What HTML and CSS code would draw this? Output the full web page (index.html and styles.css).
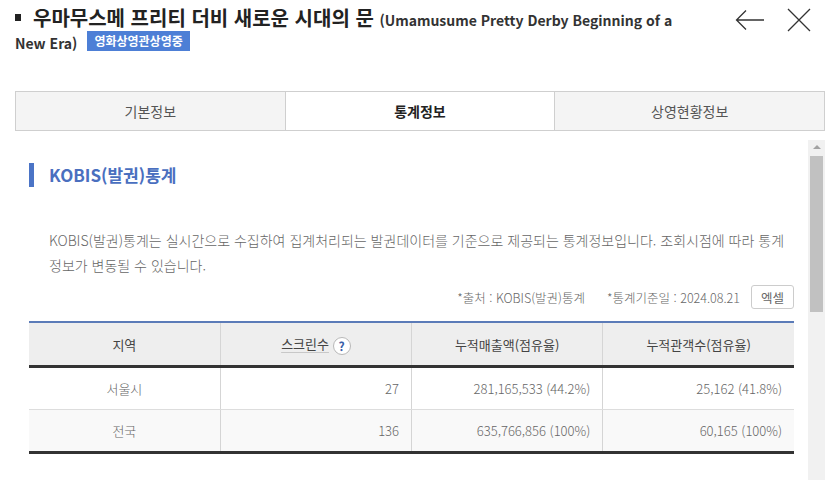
FILE: index.html
```html
<!DOCTYPE html>
<html lang="ko">
<head>
<meta charset="utf-8">
<title>KOBIS 통계</title>
<link rel="stylesheet" href="styles.css">
</head>
<body>
<div class="modal">
  <header class="head">
    <h1 class="title"><span class="bullet"></span>우마무스메 프리티 더비 새로운 시대의 문 <span class="en">(Umamusume Pretty Derby Beginning of a New Era)</span><span class="badge">영화상영관상영중</span></h1>
    <div class="tools">
      <svg class="ico-back" width="30" height="22" viewBox="0 0 30 22"><path d="M1.5 11H29M11 1.5L1.5 11L11 20.5" fill="none" stroke="#333" stroke-width="1.3"/></svg>
      <svg class="ico-close" width="24" height="24" viewBox="0 0 24 24"><path d="M1 1L23 23M23 1L1 23" fill="none" stroke="#333" stroke-width="1.3"/></svg>
    </div>
  </header>
  <nav class="tabs">
    <a class="tab">기본정보</a>
    <a class="tab active">통계정보</a>
    <a class="tab">상영현황정보</a>
  </nav>
  <div class="panel">
    <div class="content">
      <h2 class="sec-title">KOBIS(발권)통계</h2>
      <p class="desc">KOBIS(발권)통계는 실시간으로 수집하여 집계처리되는 발권데이터를 기준으로 제공되는 통계정보입니다. 조회시점에 따라 통계 정보가 변동될 수 있습니다.</p>
      <div class="meta">
        <span>*출처 : KOBIS(발권)통계</span>
        <span>*통계기준일 : 2024.08.21</span>
        <button class="btn-excel">엑셀</button>
      </div>
      <table class="stat">
        <thead>
          <tr>
            <th>지역</th>
            <th><span class="ul">스크린수</span> <span class="qmark">?</span></th>
            <th>누적매출액(점유율)</th>
            <th>누적관객수(점유율)</th>
          </tr>
        </thead>
        <tbody>
          <tr>
            <td class="c">서울시</td>
            <td>27</td>
            <td>281,165,533 (44.2%)</td>
            <td>25,162 (41.8%)</td>
          </tr>
          <tr class="alt">
            <td class="c">전국</td>
            <td>136</td>
            <td>635,766,856 (100%)</td>
            <td>60,165 (100%)</td>
          </tr>
        </tbody>
      </table>
    </div>
    <div class="scrollbar">
      <span class="up"></span>
      <span class="thumb"></span>
    </div>
  </div>
</div>
</body>
</html>
```

FILE: styles.css
```css
html, body {
  margin: 0;
  padding: 0;
  height: 480px;
  overflow: hidden;
  background: #fff;
}

body {
  font-family: "Noto Sans CJK KR", "Noto Sans", sans-serif;
  color: #333;
}

.modal {
  height: 480px;
  display: flex;
  flex-direction: column;
}

.head {
  display: flex;
  justify-content: space-between;
  align-items: flex-start;
  padding: 6px 29px 0 15px;
}

.title {
  width: 680px;
  margin: 0;
  font-size: 20px;
  font-weight: 700;
  line-height: 23px;
  color: #222;
}

.bullet {
  display: inline-block;
  width: 6px;
  height: 7px;
  background: #222;
  margin-right: 12px;
  vertical-align: 5px;
}

.en {
  font-size: 14px;
  font-weight: 700;
  line-height: 16px;
  color: #333;
}

.badge {
  display: inline-block;
  margin: 2px 0 0 10px;
  padding: 0 7px;
  height: 20px;
  line-height: 20px;
  font-size: 12px;
  font-weight: 700;
  color: #fff;
  background: #4d7fd6;
  vertical-align: top;
}

.tools {
  display: flex;
  align-items: center;
  gap: 22px;
  padding-top: 2px;
}

.tabs {
  display: flex;
  margin: 39px 15px 0;
  border: 1px solid #cfcfcf;
  background: #f4f4f4;
}

.tab {
  flex: 1;
  height: 38px;
  line-height: 38px;
  text-align: center;
  font-size: 14px;
  color: #555;
}

.tab + .tab {
  border-left: 1px solid #cfcfcf;
}

.tab.active {
  background: #fff;
  color: #222;
  font-weight: 700;
}

.panel {
  flex: 1;
  min-height: 0;
  display: flex;
  margin: 9px 15px 0;
  overflow: hidden;
}

.content {
  flex: 1;
  padding: 23px 14px 0;
}

.sec-title {
  margin: 0;
  height: 24px;
  line-height: 24px;
  border-left: 5px solid #4b74c6;
  padding-left: 15px;
  font-size: 17px;
  font-weight: 700;
  color: #4a6fbf;
}

.desc {
  margin: 41px 0 0;
  padding: 0 6px 0 20px;
  font-size: 14px;
  line-height: 25px;
  font-weight: 300;
  color: #666;
}

.meta {
  display: flex;
  justify-content: flex-end;
  align-items: center;
  gap: 22px;
  margin-top: 7px;
  font-size: 12.5px;
  font-weight: 300;
  color: #666;
}

.btn-excel {
  width: 43px;
  height: 24px;
  margin-left: -11px;
  padding: 0;
  border: 1px solid #ccc;
  border-radius: 3px;
  background: #fff;
  font-family: inherit;
  font-size: 12.5px;
  color: #666;
}

.stat {
  width: 100%;
  margin-top: 12px;
  border-collapse: collapse;
  table-layout: fixed;
  border-top: 2px solid #5b7bb8;
  border-bottom: 3px solid #333;
  font-size: 13px;
}

.stat th {
  height: 42px;
  padding: 0;
  background: #eeeeee;
  font-weight: 400;
  color: #444;
  border-bottom: 3px solid #333;
}

.stat th + th,
.stat td + td {
  border-left: 1px solid #d5d5d5;
}

.stat td {
  height: 41px;
  padding: 0 12px;
  text-align: right;
  font-weight: 300;
  color: #666;
  border-bottom: 1px solid #dddddd;
}

.stat td.c {
  text-align: center;
}

.stat tr.alt td {
  background: #f9f9f9;
}

.ul {
  text-decoration: underline;
  text-decoration-color: #c8c8c8;
  text-underline-offset: 3px;
}

.qmark {
  display: inline-block;
  width: 16px;
  height: 16px;
  line-height: 16px;
  border: 1px solid #b8b8b8;
  border-radius: 50%;
  background: #fff;
  color: #3a5fa8;
  font-size: 12px;
  font-weight: 700;
  text-align: center;
  vertical-align: -2px;
}

.scrollbar {
  width: 17px;
  background: #f1f1f1;
  display: flex;
  flex-direction: column;
  align-items: center;
  padding-top: 5px;
}

.up {
  width: 0;
  height: 0;
  border-left: 4px solid transparent;
  border-right: 4px solid transparent;
  border-bottom: 4px solid #a3a3a3;
  margin-bottom: 7px;
}

.thumb {
  width: 13px;
  height: 156px;
  background: #c1c1c1;
}
```
